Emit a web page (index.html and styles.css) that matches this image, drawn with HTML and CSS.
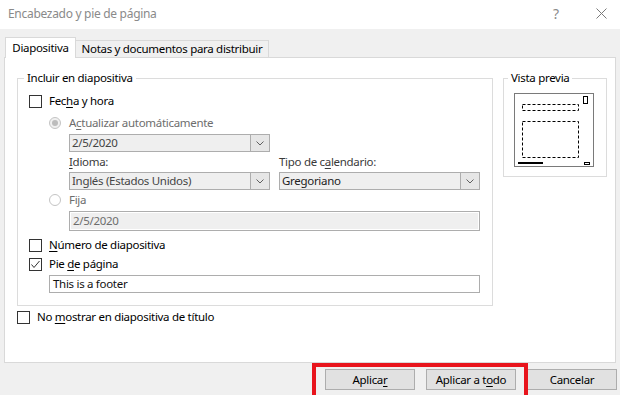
FILE: index.html
```html
<!DOCTYPE html>
<html lang="es">
<head>
<meta charset="utf-8">
<title>Encabezado y pie de página</title>
<link rel="stylesheet" href="styles.css">
</head>
<body>
<div class="titlebar">
  <span class="title">Encabezado y pie de página</span>
  <span class="help">?</span>
  <svg class="close" width="11" height="11" viewBox="0 0 11 11"><path d="M0.5 0.5L10.5 10.5M10.5 0.5L0.5 10.5" stroke="#7a7a7a" stroke-width="1" fill="none"/></svg>
</div>
<div class="main">
  <div class="tabs">
    <div class="tab active">Diapositiva</div>
    <div class="tab inactive">Notas y documentos para distribuir</div>
  </div>
  <div class="panel">
    <div class="groups">
      <fieldset class="group include">
        <legend>Incluir en diapositiva</legend>
        <div class="row r-fecha"><span class="check"></span><span>Fec<u>h</u>a y hora</span></div>
        <div class="sub">
          <div class="row r-auto dis"><span class="radio on"></span><span>A<u>c</u>tualizar automáticamente</span></div>
          <div class="indent">
            <div class="combo c-date">
              <span class="val">2/5/2020</span>
              <span class="arrow"><svg width="8" height="5" viewBox="0 0 8 5"><path d="M0.5 0.5L4 4L7.5 0.5" stroke="#606060" fill="none"/></svg></span>
            </div>
            <div class="pair">
              <div class="col">
                <div class="label"><u>I</u>dioma:</div>
                <div class="combo">
                  <span class="val">Inglés (Estados Unidos)</span>
                  <span class="arrow"><svg width="8" height="5" viewBox="0 0 8 5"><path d="M0.5 0.5L4 4L7.5 0.5" stroke="#606060" fill="none"/></svg></span>
                </div>
              </div>
              <div class="col">
                <div class="label">Tipo de c<u>a</u>lendario:</div>
                <div class="combo enabled">
                  <span class="val">Gregoriano</span>
                  <span class="arrow"><svg width="8" height="5" viewBox="0 0 8 5"><path d="M0.5 0.5L4 4L7.5 0.5" stroke="#606060" fill="none"/></svg></span>
                </div>
              </div>
            </div>
          </div>
          <div class="row r-fija dis"><span class="radio"></span><span>Fi<u>j</u>a</span></div>
          <div class="indent">
            <div class="textbox disabled-box">2/5/2020</div>
          </div>
        </div>
        <div class="row r-num"><span class="check"></span><span><u>N</u>úmero de diapositiva</span></div>
        <div class="row r-pie"><span class="check"><svg width="11" height="11" viewBox="0 0 11 11"><path d="M1.5 5.5L4 8.5L9.5 2" stroke="#333" stroke-width="1" fill="none"/></svg></span><span>Pie <u>d</u>e página</span></div>
        <div class="textbox footer-box">This is a footer</div>
      </fieldset>
      <fieldset class="group preview">
        <legend>Vista previa</legend>
        <svg class="thumb" width="80" height="74" viewBox="0 0 80 74">
          <rect x="0.5" y="0.5" width="79" height="73" fill="#fff" stroke="#7a7a7a" stroke-width="1"/>
          <rect x="69.5" y="3.5" width="4" height="7" fill="#fff" stroke="#000" stroke-width="1"/>
          <rect x="8.5" y="11.5" width="56" height="6" fill="none" stroke="#000" stroke-width="1" stroke-dasharray="3 2"/>
          <rect x="8.5" y="28.5" width="56" height="36" fill="none" stroke="#000" stroke-width="1" stroke-dasharray="3 2"/>
          <rect x="4" y="69" width="25" height="2" fill="#000"/>
          <rect x="70.5" y="69.5" width="5" height="2" fill="#fff" stroke="#000" stroke-width="1"/>
        </svg>
      </fieldset>
    </div>
    <div class="row r-nomostrar"><span class="check"></span><span>No <u>m</u>ostrar en diapositiva de título</span></div>
  </div>
  <div class="buttons">
    <div class="btn"><span>Aplica<u>r</u></span></div>
    <div class="btn"><span>Aplicar a t<u>o</u>do</span></div>
    <div class="btn"><span>Cancelar</span></div>
  </div>
</div>
<div class="highlight"></div>
</body>
</html>
```
FILE: styles.css
```css
* { box-sizing: border-box; }
html, body { margin: 0; padding: 0; }
body {
  width: 620px;
  height: 395px;
  overflow: hidden;
  background: #f0f0f0;
  font-family: "Noto Sans", "Segoe UI", "DejaVu Sans", sans-serif;
  font-size: 11.5px;
  letter-spacing: -0.3px;
  color: #000;
  position: relative;
}
u { text-decoration: underline; text-underline-offset: 2px; }

.titlebar {
  height: 29px;
  background: #fff;
  display: flex;
  align-items: center;
  padding-left: 8px;
}
.title { flex: 1; color: #8a8a8a; line-height: 16px; padding-bottom: 1px; font-size: 12px; }
.help { color: #8a8a8a; font-size: 14px; width: 14px; text-align: center; margin-right: 33px; padding-bottom: 2px; }
.close { margin-right: 13px; margin-bottom: 2px; }

.main { padding-top: 8px; }

.tabs { display: flex; align-items: flex-end; margin-left: 5px; }
.tab {
  border: 1px solid #d9d9d9;
  border-bottom: none;
  display: flex;
  justify-content: center;
  align-items: center;
  line-height: 16px;
  white-space: nowrap;
}
.tab.active {
  width: 71px;
  height: 21px;
  background: #fff;
  margin-bottom: -1px;
  position: relative;
  z-index: 1;
  padding-bottom: 1px;
}
.tab.inactive {
  width: 193px;
  height: 17px;
  background: #f0f0f0;
  border-left: none;
}

.panel {
  margin: 0 4px;
  height: 306px;
  background: #fff;
  border: 1px solid #d9d9d9;
  padding: 12px 8px 0 12px;
}
.groups { display: flex; align-items: flex-start; gap: 10px; }

.group {
  margin: 0;
  border: 1px solid #dcdcdc;
  min-width: 0;
  flex: none;
}
.group legend {
  padding: 0 3px;
  line-height: 16px;
  white-space: nowrap;
}
.include { width: 476px; padding: 7px 11px 12px 11px; }
.include legend { margin-left: -5px; }
.preview { width: 104px; padding: 7px 10px 9px 10px; }
.preview legend { margin-left: -6px; }
.thumb { display: block; }

.row { display: flex; align-items: center; height: 16px; gap: 7px; line-height: 16px; white-space: nowrap; }
.r-auto, .r-fija { gap: 8px; }
.r-auto { margin-top: 6px; }
.r-fija { margin-top: 2px; }
.r-num { margin-top: 6px; }
.r-pie { margin-top: 3px; }
.r-nomostrar { margin-top: 3px; }
.dis { color: #6d6d6d; }

.check {
  width: 13px;
  height: 13px;
  border: 1px solid #333;
  background: #fff;
  flex: none;
  display: flex;
  align-items: center;
  justify-content: center;
}
.check svg { display: block; }
.radio {
  width: 12px;
  height: 12px;
  border: 1px solid #c4c4c4;
  border-radius: 50%;
  background: #fff;
  flex: none;
  display: flex;
  align-items: center;
  justify-content: center;
}
.radio.on { background: #f0f0f0; }
.radio.on::after {
  content: "";
  width: 6px;
  height: 6px;
  border-radius: 50%;
  background: #bcbcbc;
}

.sub { padding-left: 20px; }
.indent { padding-left: 20px; }

.combo {
  width: 201px;
  height: 18px;
  border: 1px solid #adadad;
  background: #efefef;
  display: flex;
  align-items: stretch;
  color: #444;
}
.combo.enabled { color: #222; }
.c-date { margin-top: 3px; }
.combo .val { flex: 1; padding-left: 2px; line-height: 15px; white-space: nowrap; overflow: hidden; }
.combo .arrow {
  width: 19px;
  border-left: 1px solid #adadad;
  background: #e6e6e6;
  display: flex;
  align-items: center;
  justify-content: center;
}
.combo .arrow svg { display: block; margin-top: 1px; }

.pair { display: flex; gap: 9px; margin-top: 2px; }
.label { line-height: 16px; color: #3a3a3a; margin-bottom: 2px; white-space: nowrap; }

.textbox {
  border: 1px solid #adadad;
  white-space: nowrap;
}
.disabled-box {
  width: 411px;
  margin-top: 3px;
  background: #efefef;
  box-shadow: inset 0 0 0 1px #fff;
  color: #6d6d6d;
  height: 20px;
  padding-left: 3px;
  line-height: 17px;
}
.footer-box {
  width: 431px;
  margin-top: 3px;
  margin-left: 20px;
  background: #fff;
  height: 18px;
  padding-left: 3px;
  line-height: 15px;
  color: #111;
}

.buttons {
  display: flex;
  justify-content: flex-end;
  gap: 11px;
  margin-top: 6px;
  padding-right: 3px;
}
.btn {
  width: 90px;
  height: 21px;
  background: #e1e1e1;
  border: 1px solid #adadad;
  display: flex;
  align-items: center;
  justify-content: center;
  line-height: 16px;
  white-space: nowrap;
}

.highlight {
  position: absolute;
  left: 312px;
  top: 363px;
  width: 216px;
  height: 40px;
  border: 4px solid #e8141c;
}
```
